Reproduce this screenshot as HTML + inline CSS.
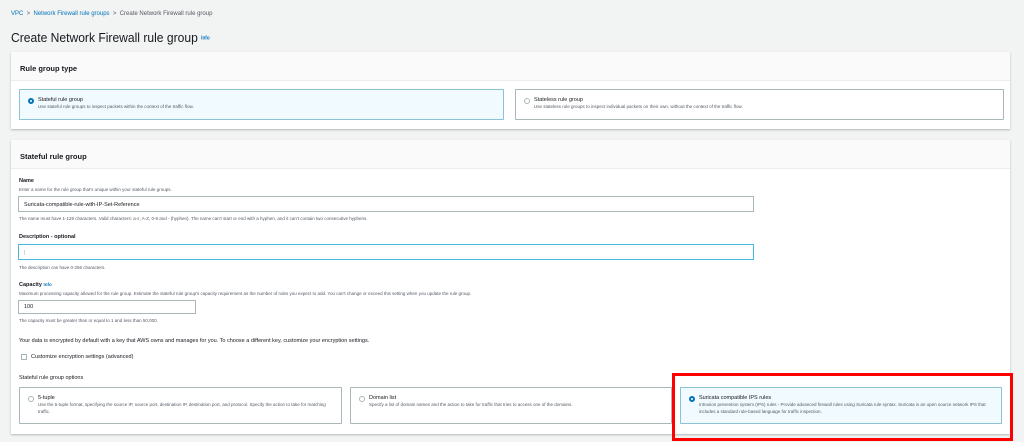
<!DOCTYPE html>
<html><head><meta charset="utf-8"><style>
*{box-sizing:border-box;margin:0;padding:0}
body{width:1024px;height:442px;background:#f2f3f3;font-family:"Liberation Sans",sans-serif;color:#16191f;position:relative;overflow:hidden}
.a{position:absolute;white-space:nowrap}
.bc{font-size:6px;top:11px;left:11px;color:#545b64}
.bc b{color:#0073bb;font-weight:normal}
h1{position:absolute;left:11px;top:30px;font-size:13px;font-weight:normal;color:#16191f;transform:scaleX(.93);transform-origin:left}
h1 span{font-size:5px;color:#0073bb;font-weight:bold;vertical-align:middle}
.panel{position:absolute;left:11px;width:999px;background:#fff;box-shadow:0 1px 2px rgba(0,0,0,.25)}
.ph{height:29px;background:#fafafa;border-bottom:1px solid #eaeded;font-size:7.5px;font-weight:bold;padding:12px 0 0 9px}
.opt{position:absolute;border:1px solid #aab7b8;background:#fff;border-radius:1px}
.opt.sel{border-color:#8bc2d4;background:#f1faff}
.opt .r{position:absolute;left:8px;top:8px;width:6px;height:6px;border-radius:50%;border:1px solid #aab7b8;background:#fff}
.opt.sel .r{border:2px solid #0073bb}
.opt .t{position:absolute;left:18px;top:7px;font-size:5.5px;color:#16191f}
.opt .d{position:absolute;left:18px;top:14px;font-size:4.5px;color:#545b64;line-height:6.5px;white-space:normal}
.lbl{font-size:5.5px;font-weight:bold;color:#16191f}
.hint{font-size:4.5px;color:#545b64}
.inp{position:absolute;border:1px solid #aab7b8;background:#fff;font-size:5.5px;padding:5px 0 0 5px}
</style></head><body>
<div class="a bc"><b>VPC</b> &nbsp;&gt;&nbsp; <b>Network Firewall rule groups</b> &nbsp;&gt;&nbsp; Create Network Firewall rule group</div>
<h1>Create Network Firewall rule group <span>Info</span></h1>

<div class="panel" style="top:52px;height:77px">
<div class="ph">Rule group type</div>
<div class="opt sel" style="left:8px;top:37px;width:485px;height:31px"><div class="r"></div><div class="t">Stateful rule group</div><div class="d">Use stateful rule groups to inspect packets within the context of the traffic flow.</div></div>
<div class="opt" style="left:504px;top:37px;width:489px;height:31px"><div class="r"></div><div class="t">Stateless rule group</div><div class="d">Use stateless rule groups to inspect individual packets on their own, without the context of the traffic flow.</div></div>
</div>

<div class="panel" style="top:140px;height:294px">
<div class="ph">Stateful rule group</div>
</div>
<div class="a lbl" style="left:19px;top:178px">Name</div>
<div class="a hint" style="left:19px;top:187px">Enter a name for the rule group that's unique within your stateful rule groups.</div>
<div class="inp" style="left:18px;top:196px;width:736px;height:16px">Suricata-compatible-rule-with-IP-Set-Reference</div>
<div class="a hint" style="left:19px;top:216px">The name must have 1-128 characters. Valid characters: a-z, A-Z, 0-9 and - (hyphen). The name can't start or end with a hyphen, and it can't contain two consecutive hyphens.</div>
<div class="a lbl" style="left:19px;top:234px">Description - optional</div>
<div class="inp" style="left:18px;top:244px;width:736px;height:16px;border:1.5px solid #44b9d6;color:#aaa">|</div>
<div class="a hint" style="left:19px;top:265px">The description can have 0-256 characters.</div>
<div class="a lbl" style="left:19px;top:282px">Capacity <span style="color:#0073bb;font-size:4.5px">Info</span></div>
<div class="a hint" style="left:19px;top:291px">Maximum processing capacity allowed for the rule group. Estimate the stateful rule group's capacity requirement as the number of rules you expect to add. You can't change or exceed this setting when you update the rule group.</div>
<div class="inp" style="left:18px;top:300px;width:178px;height:14px;padding-top:3px">100</div>
<div class="a hint" style="left:19px;top:318px">The capacity must be greater than or equal to 1 and less than 50,000.</div>
<div class="a" style="left:19px;top:338px;font-size:5.5px">Your data is encrypted by default with a key that AWS owns and manages for you. To choose a different key, customize your encryption settings.</div>
<div class="a" style="left:21px;top:354px;width:6px;height:6px;border:1px solid #aab7b8;background:#fff"></div>
<div class="a" style="left:31px;top:354px;font-size:5.5px">Customize encryption settings (advanced)</div>
<div class="a" style="left:19px;top:375px;font-size:5.5px">Stateful rule group options</div>
<div class="opt" style="left:19px;top:387px;width:323px;height:37px"><div class="r"></div><div class="t">5-tuple</div><div class="d" style="width:300px">Use the 5-tuple format, specifying the source IP, source port, destination IP, destination port, and protocol. Specify the action to take for matching traffic.</div></div>
<div class="opt" style="left:350px;top:387px;width:322px;height:37px"><div class="r"></div><div class="t">Domain list</div><div class="d" style="width:300px">Specify a list of domain names and the action to take for traffic that tries to access one of the domains.</div></div>
<div class="opt sel" style="left:680px;top:387px;width:322px;height:37px"><div class="r"></div><div class="t">Suricata compatible IPS rules</div><div class="d" style="width:300px">Intrusion prevention system (IPS) rules - Provide advanced firewall rules using Suricata rule syntax. Suricata is an open source network IPS that includes a standard rule-based language for traffic inspection.</div></div>
<div class="a" style="left:672px;top:373px;width:341px;height:68px;border:3px solid #f00"></div>
</body></html>
